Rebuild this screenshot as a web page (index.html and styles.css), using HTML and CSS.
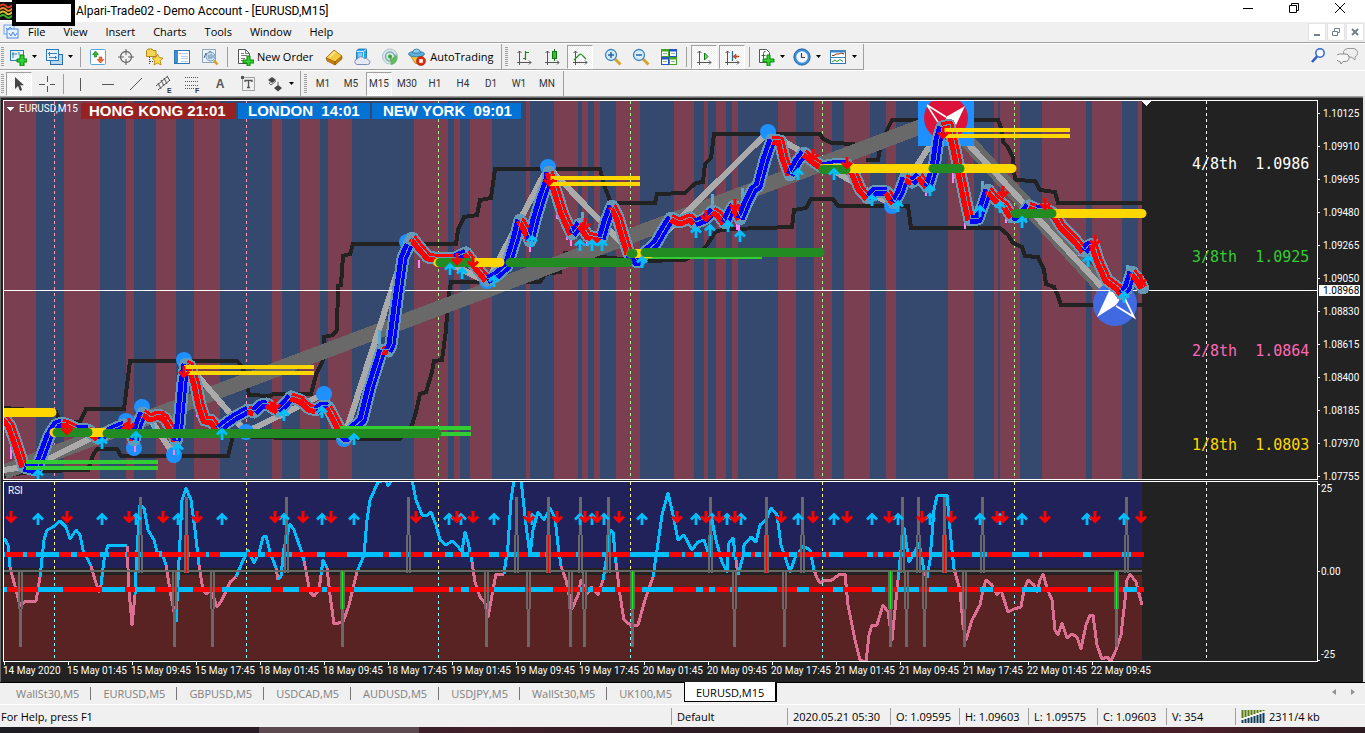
FILE: index.html
```html
<!DOCTYPE html>
<html lang="en">
<head>
<meta charset="utf-8">
<title>Alpari-Trade02 - Demo Account - [EURUSD,M15]</title>
<link rel="stylesheet" href="styles.css">
</head>
<body>
<svg class="defs" aria-hidden="true">
  <defs>
    <symbol id="i-drop" viewBox="0 0 5 3"><path d="M0 0h5L2.500 3z" fill="#000"/></symbol>
    <symbol id="i-chart" viewBox="0 0 18 18"><rect x="1.500" y="2.500" width="13" height="10" fill="#e6f2fa" stroke="#2d7ab8"/><path d="M4 4v6M3 6h5M10 4v3" stroke="#3c7fb5"/><path d="M11 7h4v4h3v3h-3v4h-4v-4H8v-3h3z" fill="#2fd32f" stroke="#07820b"/></symbol>
    <symbol id="i-profiles" viewBox="0 0 18 18"><rect x="5.500" y="6.500" width="12" height="10" fill="#b8d7ee" stroke="#2d6ea8"/><rect x="1.500" y="1.500" width="12" height="11" fill="#e6f2fa" stroke="#2d7ab8"/><path d="M3 5.500h9M4 9.500h8M4.500 4v4M10.500 8v3" stroke="#3c7fb5" fill="none"/></symbol>
    <symbol id="i-market" viewBox="0 0 18 18"><rect x="1.500" y="1.500" width="15" height="15" rx="1" fill="#fff" stroke="#5aa7dc"/><path d="M6.500 3l3 3.500h-1.800V9H5.300V6.500H3.500z" fill="#30b52c" stroke="#117010" stroke-width=".6"/><path d="M11.500 15l-3.300-3.500h2V9h2.600v2.500h2z" fill="#f26a3c" stroke="#b3300e" stroke-width=".6"/></symbol>
    <symbol id="i-cross" viewBox="0 0 18 18"><circle cx="9" cy="9" r="5.500" fill="none" stroke="#666" stroke-width="1.300"/><path d="M9 1v6M9 11v6M1 9h6M11 9h6" stroke="#666" stroke-width="1.100"/></symbol>
    <symbol id="i-nav" viewBox="0 0 18 18"><path d="M1.500 2.500L3 1h4l1 1.500h3v6H1.500z" fill="#f5d355" stroke="#b48a14"/><path d="M4.500 9v8M5 13.500h5" stroke="#444" stroke-dasharray="1 1"/><path d="M12.500 6l1.800 3.600 3.700.5-2.800 2.700.8 4.200-3.500-2-3.500 2 .8-4.200L7 10.100l3.700-.5z" fill="#ffdc4e" stroke="#a97d0c" stroke-width=".8"/></symbol>
    <symbol id="i-terminal" viewBox="0 0 18 18"><rect x="1.500" y="2.500" width="15" height="13" fill="#fff" stroke="#2d78bb"/><rect x="2" y="3" width="3" height="12" fill="#3b8fd2"/><path d="M8 5.500h7M8 8.500h7M8 10.500h7M8 13.500h7" stroke="#b9cfe8"/><path d="M6.500 5.500h1" stroke="#c33"/></symbol>
    <symbol id="i-tester" viewBox="0 0 18 18"><path d="M1.500 1.500h13v13h-13z" fill="#eef3f8" stroke="#8ba6bf"/><path d="M3 10l2-5 2 4 2-6 2 4" fill="none" stroke="#657"/><circle cx="9.500" cy="8.500" r="4.500" fill="#c6e2f5" fill-opacity=".85" stroke="#6d9cc2"/><path d="M8 7v4M10 6v5M12 7v3" stroke="#5c86a6"/><path d="M13 12.500l3.500 4" stroke="#d79e2c" stroke-width="2.500"/></symbol>
    <symbol id="i-order" viewBox="0 0 18 18"><path d="M2.500 1.500h7l4 4v10h-11z" fill="#fff" stroke="#555"/><path d="M9.500 1.500v4h4M5 5.500h3M5 7.500h6M5 10.500h4M5 12.500h3" stroke="#777" fill="none"/><path d="M11 8h3v4h4v3h-4v3h-3v-3H7v-3h4z" fill="#2fd32f" stroke="#07820b"/></symbol>
    <symbol id="i-gold" viewBox="0 0 18 18"><path d="M1 10l8-8 8 6-7 6z" fill="#f7c941" stroke="#a0690c" stroke-width=".8"/><path d="M1 10l9 4v3l-8-4zM10 14l7-6v3l-7 6z" fill="#c98210" stroke="#8c5807" stroke-width=".6"/><path d="M5 9l5-5" stroke="#fff2b8" stroke-width="1.300"/></symbol>
    <symbol id="i-cloud" viewBox="0 0 18 18"><path d="M3.500 3l2-2h8v8l-1 2h-9z" fill="#2ea6f0" stroke="#1269b4" stroke-width=".8"/><path d="M3.500 3.500h7v7M10.500 3.500l3-2.500M5 6h4M5 8h4" fill="none" stroke="#d4efff"/><path d="M4 16.500a2.800 2.800 0 01.3-5.500 4 4 0 017-.5 3 3 0 014 1.500 2.300 2.300 0 01-.8 4.500z" fill="#e4e9f4" stroke="#7a8db4"/></symbol>
    <symbol id="i-signal" viewBox="0 0 18 18"><circle cx="9" cy="8.500" r="7.500" fill="#dceadd" stroke="#a9c0cf"/><circle cx="9" cy="8.500" r="4.500" fill="none" stroke="#7fa9c4" stroke-width="1.500"/><circle cx="9" cy="8.500" r="2" fill="#2ea83d"/><path d="M8.500 10H11a6 6 0 004-4 7 7 0 01-5 11z" fill="#66b862"/></symbol>
    <symbol id="i-auto" viewBox="0 0 18 18"><path d="M2 7h13l-4 9.500L7 15z" fill="#f2c53a" stroke="#a47a0a" stroke-width=".8"/><ellipse cx="8.500" cy="6" rx="8" ry="2.800" fill="#5fb0dc" stroke="#29739d" stroke-width=".8"/><path d="M4.500 5a4 4 0 018 0z" fill="#8fd0ef" stroke="#29739d" stroke-width=".8"/><circle cx="13" cy="13" r="4.500" fill="#e02a13" stroke="#9e1608" stroke-width=".6"/><rect x="11.200" y="11.200" width="3.600" height="3.600" fill="#fff"/></symbol>
    <symbol id="i-axes" viewBox="0 0 18 18"><path d="M4.500 3v14M2 14.500h14M2.500 5l2-2 2 2M14 12.500l2 2-2 2" fill="none" stroke="#555"/></symbol>
    <symbol id="i-bars" viewBox="0 0 18 18"><use href="#i-axes"/><path d="M10.500 3v9M11 4.500h3M8 10.500h3" stroke="#19891d" stroke-width="1.200"/></symbol>
    <symbol id="i-candle" viewBox="0 0 18 18"><use href="#i-axes"/><path d="M11.500 1v12" stroke="#117a14"/><rect x="9.500" y="3.500" width="4" height="7" fill="#29c72c" stroke="#117a14"/></symbol>
    <symbol id="i-line" viewBox="0 0 18 18"><use href="#i-axes"/><path d="M3 12l5-5q2-2 4 1l3 3" fill="none" stroke="#27962a" stroke-width="1.200"/></symbol>
    <symbol id="i-zin" viewBox="0 0 18 18"><path d="M11 11l5.500 5.500" stroke="#d6a52c" stroke-width="3"/><circle cx="7" cy="7" r="5.500" fill="#d5edfb" stroke="#3f82bf" stroke-width="1.300"/><path d="M4 7h6M7 4v6" stroke="#2464a4" stroke-width="1.500"/></symbol>
    <symbol id="i-zout" viewBox="0 0 18 18"><path d="M11 11l5.500 5.500" stroke="#d6a52c" stroke-width="3"/><circle cx="7" cy="7" r="5.500" fill="#d5edfb" stroke="#3f82bf" stroke-width="1.300"/><path d="M4 7h6" stroke="#2464a4" stroke-width="1.500"/></symbol>
    <symbol id="i-tile" viewBox="0 0 18 18"><path d="M1 1h8v8H1zM9 9h8v8H9z" fill="#3fa51f"/><path d="M9 1h8v8H9zM1 9h8v8H1z" fill="#2653c9"/><path d="M2 3.500h6V8H2zM10 3.500h6V8h-6zM2 11.500h6V16H2zM10 11.500h6V16h-6z" fill="#fff"/><path d="M3 5.500h4M11 5.500h4M3 13.500h4M11 13.500h4" stroke="#8b9"/></symbol>
    <symbol id="i-scroll" viewBox="0 0 18 18"><use href="#i-axes"/><path d="M9.500 5v7l3.500-3.500z" fill="#6fe070" stroke="#117a14"/></symbol>
    <symbol id="i-shift" viewBox="0 0 18 18"><use href="#i-axes"/><path d="M9.500 3v10" stroke="#2469a4" stroke-width="1.300"/><path d="M10 8.500l3-2.500v2h3v1h-3v2z" fill="#d9481c" stroke="#a82c08" stroke-width=".5"/></symbol>
    <symbol id="i-ind" viewBox="0 0 18 18"><path d="M2.500 1.500h7l3 3v10h-10z" fill="#fff" stroke="#555"/><path d="M8.500 3.500q-2-.5-2 2v6M4.500 7.500h4" stroke="#555" fill="none"/><path d="M10 7h3v4h4v3h-4v4h-3v-4H6v-3h4z" fill="#2fd32f" stroke="#07820b"/></symbol>
    <symbol id="i-clock" viewBox="0 0 18 18"><circle cx="9" cy="9" r="7" fill="#f2f6fa" stroke="#3b8fe0" stroke-width="2.500"/><circle cx="9" cy="9" r="8.200" fill="none" stroke="#124b87" stroke-width=".7"/><path d="M8.500 5v4.500H12" fill="none" stroke="#444" stroke-width="1.200"/></symbol>
    <symbol id="i-tpl" viewBox="0 0 18 18"><rect x="1.500" y="2.500" width="15" height="13" fill="#fff" stroke="#2d73b6"/><path d="M1 2h16v2.500H1zM1 9h16v1H1z" fill="#3c86c8"/><path d="M3 7.500h2l2-1.500h3l2-1 3 1" fill="none" stroke="#8d3a22"/><path d="M3 14l3-2 2 1.500 3-2 3 2" fill="none" stroke="#27962a"/></symbol>
    <symbol id="i-cursor" viewBox="0 0 18 18"><path d="M5 2v12l3-3 2 5 2.200-1-2-4.800H14z" fill="#444"/></symbol>
    <symbol id="i-hair" viewBox="0 0 18 18"><path d="M9.500 1v6M9.500 11V17M1 9.500h6M12 9.500H17" stroke="#555"/></symbol>
    <symbol id="i-vline" viewBox="0 0 18 18"><path d="M9.500 3v13" stroke="#555"/></symbol>
    <symbol id="i-hline" viewBox="0 0 18 18"><path d="M3 9.500h12" stroke="#555"/></symbol>
    <symbol id="i-trend" viewBox="0 0 18 18"><path d="M3 15L15 3" stroke="#555"/></symbol>
    <symbol id="i-chan" viewBox="0 0 18 18"><path d="M1 11L13 1M3 15L15 5M3 8l3 6M6 5l3 6M9 3l3 6M12 1l3 5" stroke="#555" fill="none"/><text x="12" y="18" class="ico-text">E</text></symbol>
    <symbol id="i-fibo" viewBox="0 0 18 18"><path d="M2 2.500h14M2 6.500h14M2 10.500h14M2 13.500h9" stroke="#555" stroke-dasharray="1 1"/><text x="12" y="18" class="ico-text">F</text></symbol>
    <symbol id="i-label" viewBox="0 0 18 18"><rect x="3.500" y="2.500" width="12" height="13" fill="none" stroke="#555" stroke-dasharray="1 1"/><path d="M2 1h3v3H2z" fill="#555"/><path d="M6 7V5.500h7V7M9.500 5v8M8 12.500h3" stroke="#555" stroke-width="1.300" fill="none"/></symbol>
    <symbol id="i-arrows" viewBox="0 0 18 18"><path d="M2 5l4-3 4 3-4 3zM8 13l4-3 4 3-4 3.500z" fill="#444"/><path d="M3 8l2 2 5-4M5 6l-2 3M12 7v4" stroke="#666" fill="none"/></symbol>
    <symbol id="i-find" viewBox="0 0 18 18"><circle cx="11" cy="6" r="4.200" fill="#f6faff" stroke="#2f67cf" stroke-width="1.500"/><path d="M8 9.500L3 15" stroke="#2a5cc4" stroke-width="2.600"/></symbol>
    <symbol id="i-chat" viewBox="0 0 22 18"><path d="M9 9a5 4 0 012-7.500h6a4.500 4.500 0 011 8.500v3l-3-2.500z" fill="#eee" stroke="#999"/><path d="M3 14.500A4.500 3.600 0 014 7h4a4 3.700 0 010 7.500H6L4 17z" fill="#f6f6f6" stroke="#888"/></symbol>
    <symbol id="i-app" viewBox="0 0 12 18"><rect width="12" height="18" fill="#111"/><g fill="none" stroke-width="1.800"><path d="M0 4q3-3 6 0t6-1" stroke="#e33b22"/><path d="M0 7.500q3-3 6 0t6-1" stroke="#f08b22"/><path d="M0 11q3-3 6 0t6-1" stroke="#d8c32c"/><path d="M0 14.500q3-3 6 0t6-1" stroke="#37b52f"/></g></symbol>
    <symbol id="i-doc" viewBox="0 0 16 16"><rect x="1" y="1" width="10" height="9" fill="#e8f2ff" stroke="#6ca2ea"/><rect x="4" y="5" width="11" height="9" fill="#e8f2ff" stroke="#4d8be0"/><path d="M6 9l2 3 2-4 2 4 2-3M3 4l2 2 2-3 2 2" fill="none" stroke="#4d8be0"/></symbol>
  </defs>
</svg>

<div class="app">
  <header class="titlebar">
    <svg class="app-icon"><use href="#i-app"/></svg>
    <span class="redacted"></span>
    <h1 class="title">Alpari-Trade02 - Demo Account - [EURUSD,M15]</h1>
    <div class="window-controls">
      <button type="button" aria-label="Minimize"><svg viewBox="0 0 12 12"><path d="M1 6.500h10"/></svg></button>
      <button type="button" aria-label="Restore"><svg viewBox="0 0 12 12"><path d="M1.500 3.500h7v7h-7zM3.500 3.500v-2h7v7h-2"/></svg></button>
      <button type="button" aria-label="Close"><svg viewBox="0 0 12 12"><path d="M1 1l10 10M11 1L1 11"/></svg></button>
    </div>
  </header>

  <nav class="menubar">
    <svg class="doc-icon"><use href="#i-doc"/></svg>
    <button type="button">File</button><button type="button">View</button><button type="button">Insert</button><button type="button">Charts</button><button type="button">Tools</button><button type="button">Window</button><button type="button">Help</button>
    <div class="child-controls">
      <button type="button" aria-label="Minimize chart"><svg viewBox="0 0 10 10"><path d="M2 8h6"/></svg></button>
      <button type="button" aria-label="Restore chart"><svg viewBox="0 0 10 10"><path d="M1.500 4.500h5v4h-5zM3.500 4V1.500h5v4H7" class="thin"/></svg></button>
      <button type="button" aria-label="Close chart"><svg viewBox="0 0 10 10"><path d="M2 2l6 6M8 2L2 8"/></svg></button>
    </div>
  </nav>

  <div class="toolrow">
    <div class="toolbar">
      <i class="grip"></i>
      <button class="tb drop" type="button" aria-label="New chart"><svg><use href="#i-chart"/></svg><svg class="arr"><use href="#i-drop"/></svg></button>
      <button class="tb drop" type="button" aria-label="Profiles"><svg><use href="#i-profiles"/></svg><svg class="arr"><use href="#i-drop"/></svg></button>
      <i class="sep"></i>
      <button class="tb" type="button" aria-label="Market Watch"><svg><use href="#i-market"/></svg></button>
      <button class="tb" type="button" aria-label="Data Window"><svg><use href="#i-cross"/></svg></button>
      <button class="tb" type="button" aria-label="Navigator"><svg><use href="#i-nav"/></svg></button>
      <button class="tb" type="button" aria-label="Terminal"><svg><use href="#i-terminal"/></svg></button>
      <button class="tb" type="button" aria-label="Strategy Tester"><svg><use href="#i-tester"/></svg></button>
      <i class="sep"></i>
      <button class="tb wide" type="button"><svg><use href="#i-order"/></svg>New Order</button>
      <button class="tb" type="button" aria-label="MetaEditor"><svg><use href="#i-gold"/></svg></button>
      <button class="tb" type="button" aria-label="Virtual hosting"><svg><use href="#i-cloud"/></svg></button>
      <button class="tb" type="button" aria-label="Signals"><svg><use href="#i-signal"/></svg></button>
      <button class="tb wide auto" type="button"><svg><use href="#i-auto"/></svg>AutoTrading</button>
    </div>
    <div class="toolbar">
      <i class="grip"></i>
      <button class="tb" type="button" aria-label="Bar chart"><svg><use href="#i-bars"/></svg></button>
      <button class="tb" type="button" aria-label="Candlesticks"><svg><use href="#i-candle"/></svg></button>
      <button class="tb on" type="button" aria-label="Line chart"><svg><use href="#i-line"/></svg></button>
      <i class="sep clear"></i>
      <button class="tb" type="button" aria-label="Zoom in"><svg><use href="#i-zin"/></svg></button>
      <button class="tb" type="button" aria-label="Zoom out"><svg><use href="#i-zout"/></svg></button>
      <button class="tb" type="button" aria-label="Tile windows"><svg><use href="#i-tile"/></svg></button>
      <i class="sep"></i>
      <button class="tb on" type="button" aria-label="Auto scroll"><svg><use href="#i-scroll"/></svg></button>
      <button class="tb on" type="button" aria-label="Chart shift"><svg><use href="#i-shift"/></svg></button>
      <i class="sep"></i>
      <button class="tb drop" type="button" aria-label="Indicators"><svg><use href="#i-ind"/></svg><svg class="arr"><use href="#i-drop"/></svg></button>
      <button class="tb drop" type="button" aria-label="Periods"><svg><use href="#i-clock"/></svg><svg class="arr"><use href="#i-drop"/></svg></button>
      <button class="tb drop" type="button" aria-label="Templates"><svg><use href="#i-tpl"/></svg><svg class="arr"><use href="#i-drop"/></svg></button>
    </div>
    <div class="tools-right">
      <button class="tb" type="button" aria-label="Search"><svg><use href="#i-find"/></svg></button>
      <button class="tb" type="button" aria-label="Chat"><svg class="chat"><use href="#i-chat"/></svg></button>
    </div>
  </div>

  <div class="toolrow second">
    <div class="toolbar">
      <i class="grip"></i>
      <button class="tb on" type="button" aria-label="Cursor"><svg><use href="#i-cursor"/></svg></button>
      <button class="tb" type="button" aria-label="Crosshair"><svg><use href="#i-hair"/></svg></button>
      <i class="sep"></i>
      <button class="tb" type="button" aria-label="Vertical line"><svg><use href="#i-vline"/></svg></button>
      <button class="tb" type="button" aria-label="Horizontal line"><svg><use href="#i-hline"/></svg></button>
      <button class="tb" type="button" aria-label="Trendline"><svg><use href="#i-trend"/></svg></button>
      <button class="tb" type="button" aria-label="Equidistant channel"><svg><use href="#i-chan"/></svg></button>
      <button class="tb" type="button" aria-label="Fibonacci"><svg><use href="#i-fibo"/></svg></button>
      <button class="tb letter" type="button">A</button>
      <button class="tb" type="button" aria-label="Text label"><svg><use href="#i-label"/></svg></button>
      <button class="tb drop" type="button" aria-label="Arrows"><svg><use href="#i-arrows"/></svg><svg class="arr"><use href="#i-drop"/></svg></button>
    </div>
    <div class="toolbar periods">
      <i class="grip"></i>
      <button class="tb" type="button">M1</button><button class="tb" type="button">M5</button><button class="tb on" type="button">M15</button><button class="tb" type="button">M30</button><button class="tb" type="button">H1</button><button class="tb" type="button">H4</button><button class="tb" type="button">D1</button><button class="tb" type="button">W1</button><button class="tb" type="button">MN</button>
    </div>
  </div>

  <main class="chart">
    <svg id="chart" viewBox="0 96 1365 586" role="img" aria-label="EURUSD M15 chart with RSI"></svg>
  </main>

  <nav class="tabs">
    <a href="#">WallSt30,M5</a><a href="#">EURUSD,M5</a><a href="#">GBPUSD,M5</a><a href="#">USDCAD,M5</a><a href="#">AUDUSD,M5</a><a href="#">USDJPY,M5</a><a href="#">WallSt30,M5</a><a href="#" class="last">UK100,M5</a><a href="#" class="active" aria-current="page">EURUSD,M15</a>
    <div class="tab-scroll">
      <button type="button" aria-label="Scroll left"><svg viewBox="0 0 4 6"><path d="M4 0v6L0 3z"/></svg></button>
      <button type="button" aria-label="Scroll right"><svg viewBox="0 0 4 6"><path d="M0 0v6l4-3z"/></svg></button>
    </div>
  </nav>

  <footer class="status">
    <span class="help">For Help, press F1</span>
    <span class="profile">Default</span>
    <span class="time">2020.05.21 05:30</span>
    <span>O: 1.09595</span>
    <span>H: 1.09603</span>
    <span>L: 1.09575</span>
    <span>C: 1.09603</span>
    <span>V: 354</span>
    <span class="traffic"><svg viewBox="0 0 24 13"><path class="g" d="M1.500 0v8M4.500 0v7M7.500 0v6M10.500 0v5M13.500 0v4M16.500 0v3M19.500 0v2M22.500 0v1"/><path class="n" d="M1.500 10v3M4.500 9v4M7.500 8v5M10.500 7v6M13.500 6v7M16.500 5v8M19.500 4v9M22.500 3v10"/></svg>2311/4 kb</span>
  </footer>
  <div class="taskbar"><i></i></div>
</div>
<script src="chart.js"></script>
</body>
</html>
```
FILE: styles.css
```css
* { box-sizing: border-box; }
body { margin: 0; background: #f0f0f0; color: #000; font: 11px/16px "Open Sans", "Noto Sans", sans-serif; }
button { border: 0; padding: 0; margin: 0; background: none; color: inherit; font: inherit; }
.defs { position: absolute; width: 0; height: 0; }
.app { display: flex; flex-direction: column; min-height: 100vh; }

.titlebar { display: flex; align-items: center; height: 22px; background: #fff; }
.app-icon { width: 12px; height: 18px; }
.redacted { align-self: flex-start; width: 63px; height: 26px; border: 4px solid #000; background: #fff; z-index: 1; }
.title { flex: 1; margin: 0 0 0 1px; font: 400 12px/16px Roboto, sans-serif; }
.window-controls { display: flex; margin-right: 2px; align-self: flex-start; }
.window-controls button { width: 46px; height: 20px; }
.window-controls svg { width: 12px; height: 12px; fill: none; stroke: #000; }

.menubar { display: flex; align-items: center; height: 21px; border-bottom: 1px solid #a0a0a0; }
.menubar > button { padding: 0 9px; }
.doc-icon { width: 16px; height: 16px; margin: 2px 0 0 3px; align-self: flex-start; }
.child-controls { display: flex; gap: 1px; margin-left: auto; margin-right: 1px; }
.child-controls button { width: 18px; height: 18px; background: #fff; border: 1px solid #e3e3e3; display: grid; place-items: center; }
.child-controls svg { width: 10px; height: 10px; fill: none; stroke: #70808f; stroke-width: 2; }
.child-controls .thin { stroke-width: 1; }

.toolrow { display: flex; height: 27px; border-top: 1px solid #fff; }
.toolbar { display: flex; align-items: center; padding-right: 2px; border-right: 1px solid #a0a0a0; border-bottom: 1px solid #a0a0a0; }
.toolrow.second { height: 26px; }
.toolrow.second .toolbar { border-bottom: 0; }
.grip { width: 3px; height: 20px; margin: 0 1px; background: repeating-linear-gradient(#a0a0a0 0 1px, #f0f0f0 1px 2px); }
.toolbar + .toolbar .grip { margin: 0 2px 0 3px; }
.sep { width: 1px; height: 20px; margin: 0 3px; background: #a0a0a0; }
.sep.clear, .second .sep { margin: 0 2px; }
.sep.clear { background: none; }
.tb { display: flex; align-items: center; justify-content: center; width: 28px; height: 24px; }
.tb svg { width: 18px; height: 18px; flex: none; }
.tb .arr { width: 5px; height: 3px; margin-left: 5px; }
.tb .chat { width: 22px; }
.tb.drop { width: 36px; }
.tb.wide { width: auto; padding: 0 7px 0 5px; gap: 3px; }
.tb.auto { padding: 0 6px 0 4px; gap: 4px; }
.tb.on { width: 26px; margin: 0 1px; border: 1px solid; border-color: #a0a0a0 #fff #fff #a0a0a0; background: repeating-conic-gradient(#fff 0 25%, #efefef 0 50%) 0 0 / 2px 2px; }
.tb.letter { font: bold 12px "Liberation Sans", sans-serif; color: #555; }
.ico-text { font: bold 7px "Liberation Sans", sans-serif; fill: #333; }
.periods .tb { font: 10px Roboto, sans-serif; color: #333; }
.tools-right { display: flex; gap: 2px; margin-left: auto; margin-right: 3px; }

.chart { background: #222; }
.chart > svg { display: block; width: 100%; height: auto; }
.chart text { font-family: Roboto, sans-serif; font-size: 10px; fill: #fff; white-space: pre; }
.chart .session { font: bold 15px "Liberation Sans", sans-serif; fill: #fff; }
.chart .level { font: 15px "DejaVu Sans Mono", monospace; }

.tabs { display: flex; align-items: flex-start; height: 22px; border-top: 1px solid #000; color: #808080; }
.tabs a { position: relative; padding: 0 12px; line-height: 21px; color: inherit; text-decoration: none; }
.tabs a:first-child { padding-left: 16px; }
.tabs a:not(.active):not(.last)::after { content: ""; position: absolute; right: 0; top: 4px; height: 13px; border-right: 1px solid #777; }
.tabs .active { height: 20px; margin-top: -1px; padding: 0 11px; border: 1px solid #000; border-top: 0; border-right-width: 2px; background: #fff; color: #000; }
.tab-scroll { display: flex; margin-left: auto; margin-right: 3px; }
.tab-scroll button { width: 19px; height: 16px; }
.tab-scroll svg { width: 4px; height: 6px; fill: #909090; }

.status { display: flex; align-items: stretch; height: 23px; padding: 3px 0 2px; border-top: 1px solid #fff; line-height: 18px; }
.status span { width: 69px; padding-left: 5px; border-left: 1px solid #a0a0a0; white-space: nowrap; }
.status .help { flex: 1; padding-left: 1px; border-left: 0; }
.status .profile { width: 116px; }
.status .time { width: 103px; }
.status .traffic { display: flex; align-items: center; gap: 4px; width: 130px; }
.traffic svg { width: 24px; height: 13px; }
.traffic .g { stroke: #5a7d0c; stroke-width: 2; }
.traffic .n { stroke: #12405c; stroke-width: 2; }
.taskbar { flex: 1; min-height: 6px; background: linear-gradient(90deg, #1d1c22, #2b1c24 20%, #42202a 35%, #2c1b22 50%, #3a1c24 75%, #4a2029 88%, #2b1a20); }
.taskbar i { display: block; width: 160px; height: 6px; margin-left: 19%; background: #5b494f; }
```
FILE: chart.js
```js
const NS = "http://www.w3.org/2000/svg";
const root = document.getElementById("chart");
const parts = [];
const put = s => parts.push(s);
const rect = (x, y, w, h, fill) => put(`<rect x="${x}" y="${y}" width="${w}" height="${h}" fill="${fill}"/>`);
const line = (pts, stroke, w, extra = "") => put(`<polyline points="${pts}" fill="none" stroke="${stroke}" stroke-width="${w}" ${extra}/>`);
const text = (x, y, s, cls = "", extra = "") => put(`<text x="${x}" y="${y}" class="${cls}" ${extra}>${s}</text>`);

const RED = "#ff0000", BLUE = "#0000ff", SKY = "#00bfff", STEEL = "#6699b5", GOLD = "#ffd700", GREEN = "#228b22", LIME = "#32cd32", DODGER = "#1e90ff", DARK = "#222222", DIM = "#696969";

put(`<defs><clipPath id="main"><rect x="4" y="101" width="1313" height="378"/></clipPath><clipPath id="rsi"><rect x="4" y="482" width="1313" height="179"/></clipPath></defs>`);
rect(0, 96, 1365, 586, DARK);
rect(0, 96, 1365, 1, "#a0a0a0");
rect(0, 97, 1363, 1, DIM);
rect(0, 97, 1, 585, DIM);
rect(1363, 96, 2, 586, "#e3e3e3");
put(`<g shape-rendering="crispEdges">`);

/* trend background */
rect(4, 101, 1138, 378, "#35486e");
[[4,36],[64,100],[126,134],[156,176],[194,220],[272,282],[300,320],[328,352],[414,448],[454,460],[470,492],[526,530],[554,578],[582,588],[594,600],[616,640],[674,694],[704,708],[716,726],[732,738],[778,796],[814,832],[844,870],[886,896],[948,974],[994,998],[1000,1020],[1042,1086],[1092,1122],[1138,1142]]
  .forEach(([a, b]) => rect(a, 101, b - a, 378, "#7a4052"));
rect(4, 482, 1138, 86, "#212259");
rect(4, 575, 1138, 85, "#592223");

/* day separators */
[[54,"#ff9bb4"],[246,"#ff9bb4"],[438,"#a6f28a"],[630,"#a6f28a"],[822,"#a6f28a"],[1014,"#a6f28a"],[1206,"#ffffff"]].forEach(([x, c]) => {
  const d = `stroke-dasharray="3 3"`, w = c === "#ffffff";
  line(`${x + .5},101 ${x + .5},479`, c, 1, d);
  line(`${x + .5},482 ${x + .5},571`, w ? c : "#ffff80", 1, d);
  line(`${x + .5},571 ${x + .5},660`, w ? c : "#80ffff", 1, d);
});

put(`<g clip-path="url(#main)">`);
/* channel */
line("4,408 56,412 60,421 80,422 86,409 124,409 130,361 237,361 242,366 246,378 249,395 270,396 273,394 311,394 316,375 323,360 324,337 333,335 337,330 338,286 341,285 343,256 350,254 353,244 456,244 458,230 464,217 477,215 480,200 491,198 495,169 600,169 604,185 611,203 655,203 657,194 685,193 690,188 696,183 703,182 705,164 711,158 714,134 820,134 823,139 832,143 855,144", DARK, 4);
line("866,160 878,160 881,143 887,130 892,120 998,120 1002,130 1003,142 1008,147 1013,158 1015,180 1035,181 1040,190 1055,192 1058,203 1142,203", DARK, 4);
line("4,476 36,471 88,470 93,455 97,449 117,449 121,456 228,456 233,436 287,438 400,439 412,425 416,412 420,394 426,392 432,372 434,361 442,360 446,330 448,300 451,282 540,282 545,274 560,272 565,253 640,261 685,260 700,252 707,245 716,231 733,229 792,227 794,210 806,208 811,199 833,199 838,206 908,206 911,228 1000,228 1008,235 1013,243 1022,247 1025,256 1038,257 1044,270 1046,284 1054,287 1058,296 1061,305 1142,305", DARK, 4);
/* long swing */
line("4,472 920,127 946,118 1114,300", DIM, 15);
const swing = "4,470 36,465 126,421 134,448 142,407 174,455 184,360 246,432 324,394 344,438 407,242 487,282 548,167 638,260 768,132 892,205 946,120 1114,300";
line(swing, "#aaaaaa", 6);
put(`<g fill="${DODGER}" shape-rendering="auto">`);
[[126,421],[134,448],[142,407],[174,455],[184,360],[246,432],[324,394],[344,439],[407,242],[487,281],[548,167],[638,260],[768,132],[892,206]]
  .forEach(([x, y]) => put(`<circle cx="${x}" cy="${y}" r="8"/>`));
put(`</g>`);
rect(918, 101, 56, 45, DODGER);
put(`<g shape-rendering="auto"><circle cx="946" cy="118" r="22" fill="#dc143c"/><path d="M927 105l19 12M927 105l14 22" stroke="#fff" stroke-width="1.500"/><path d="M965 106l-19 11 2 10 8-2z" fill="#fff"/><circle cx="1115" cy="304" r="22" fill="#4169e1"/><path d="M1097 317l12-26 14 4-7 10z" fill="#fff"/><path d="M1123 295l11 22-18-11" fill="none" stroke="#fff" stroke-width="1.800"/></g>`);

line("4,290.500 1317,290.500", "#fff", 1);

/* wicks */
[[10,447,12],[98,433,6],[134,442,10],[173,443,12],[196,405,12],[332,420,8],[418,260,8],[529,240,12],[556,205,14],[566,230,10],[570,236,10],[586,238,8],[736,220,10],[738,222,10],[780,160,8],[925,188,8],[952,150,33],[964,215,14],[1005,217,6],[1078,248,8],[1094,255,10]].forEach(([x, y, h]) => rect(x, y, 2, h, "#ff80ff"));
[[84,424,8],[152,424,6],[238,409,6],[378,330,20],[392,285,20],[581,212,20],[711,194,15],[741,188,12],[758,160,12],[981,181,10],[1126,265,12]].forEach(([x, y, h]) => rect(x, y, 3, h, "#5fa8cc"));

/* smoothed price: colour, then x,y pairs */
const price = [
  ["r",4,418,10,426,16,443,24,467],["b",24,467,36,470,42,455,49,436,56,425,62,423],["r",62,423,68,425,76,429],["b",76,429,88,430],["r",88,430,98,438],["b",98,438,112,430,124,425],["r",124,425,130,430,134,440],["b",134,440,138,425,143,413],["r",143,413,150,418,158,415,165,418,172,430,176,441],["b",176,441,179,425,183,382,186,364],["r",186,364,190,366,196,385,200,405,205,420,211,420,218,430],["b",218,430,225,424,235,417,248,410],["r",248,410,254,412],["b",254,412,261,405,267,404],["r",267,404,278,411],["b",278,411,285,404,291,397],["r",291,397,300,400,309,408,316,410],["b",316,410,322,406,328,407],["r",328,407,335,420,342,434],["b",342,434,346,438,353,428,362,420,370,388,382,350],["r",382,350,388,351],["b",388,351,391,345,397,300,403,258,409,245],["r",412,238,420,248,428,257,440,259,455,258],["b",455,258,466,253],["r",466,253,474,264,487,280],["b",487,280,497,275,507,266,515,240,520,220],["r",520,220,526,230,530,241],["b",530,241,535,220,541,200,548,180,549,172],["r",549,172,556,192,563,214,572,234],["b",572,234,580,224],["r",580,224,588,236,601,239],["b",601,239,606,222,612,206],["r",612,206,618,218,624,238,629,254],["b",629,254,637,262,646,252,656,243,664,229,671,218],["r",671,218,679,222,690,218,695,223],["b",695,223,705,219,713,211],["r",713,211,718,214,725,223],["b",725,223,731,210,734,206],["r",734,206,740,219],["b",740,219,747,202,753,190,758,186,765,160,772,140],["r",772,140,780,141,784,158,790,175],["b",790,175,797,162,804,153],["r",804,153,812,160,822,167],["b",822,167,832,165,846,164],["r",846,164,853,172,860,189,868,198],["b",868,198,875,191,887,192],["r",887,192,894,203],["b",894,203,900,192,905,178],["r",905,178,912,182],["b",912,182,919,176],["r",919,176,928,187],["b",928,187,934,168,938,140,942,127],["r",942,127,949,125,954,145,961,178,966,202,970,220],["b",970,220,978,219,984,202,988,190],["r",988,190,996,199,1005,206,1012,217],["b",1012,217,1022,215,1029,206],["r",1029,206,1036,209],["b",1036,209,1045,209],["r",1045,209,1054,214,1062,227,1075,240,1084,251],["b",1084,251,1088,246,1093,244],["r",1093,244,1098,260,1107,280,1118,288,1122,294],["b",1122,294,1127,288,1132,272],["r",1132,272,1137,278,1143,288]
];
const pairs = a => a.slice(1).join(" ");
const join = `stroke-linejoin="round" stroke-linecap="round"`;
line(price.map(pairs).join(" "), STEEL, 13, join);
price.forEach(s => line(pairs(s), s[0] === "r" ? RED : BLUE, 9, `stroke-linejoin="round"`));
put(`<g transform="translate(1 -1)">`);
line(price.map(pairs).join(" "), STEEL, 1, join);
put(`</g>`);

/* support and resistance */
[[184,314,367,GOLD],[184,314,373,GOLD],[548,640,178,GOLD],[548,640,184,GOLD],[941,1070,130,GOLD],[941,1070,136,GOLD],[26,158,462,LIME],[26,158,468,LIME],[340,471,428,LIME],[340,471,434,LIME],[640,762,257,LIME]]
  .forEach(([a, b, y, c]) => line(`${a},${y} ${b},${y}`, c, 4));
put(`<g stroke-linecap="round" stroke-width="9" shape-rendering="auto">`);
[[-4,52,412,GOLD],[54,104,432,GOLD],[57,88,432,GREEN],[107,437,433,GREEN],[438,500,262,GOLD],[440,470,262,GREEN],[510,628,262,GREEN],[631,650,253,GOLD],[631,633,253,GREEN],[645,820,252,GREEN],[824,1012,168,GOLD],[823,846,169,GREEN],[933,960,168,GREEN],[1020,1142,213,GOLD],[1015,1052,213,GREEN]]
  .forEach(([a, b, y, c]) => put(`<path d="M${a} ${y + .5}H${b}" stroke="${c}"/>`));
put(`</g>`);
put(`<g shape-rendering="auto">`);
const up = (x, y) => put(`<path transform="translate(${x} ${y})" d="M-5 0.500L0 -4.500L5 0.500M0 -4V6" fill="none" stroke="${SKY}" stroke-width="2.800"/>`);
const down = (x, y) => put(`<path transform="translate(${x} ${y})" d="M-5 -0.500L0 4.500L5 -0.500M0 4V-6" fill="none" stroke="${RED}" stroke-width="3"/>`);
[[38,475],[102,443],[136,437],[178,449],[222,434],[284,415],[322,412],[354,439],[450,269],[462,273],[494,281],[532,241],[580,245],[592,245],[602,245],[642,262],[696,232],[710,230],[728,226],[740,236],[798,174],[834,174],[872,200],[898,206],[930,190],[980,211],[1000,207],[1022,222],[1088,261],[1124,297]].forEach(p => up(...p));
[[67,429],[129,424],[163,417],[184,372],[275,405],[303,402],[457,259],[473,262],[549,180],[585,224],[706,216],[735,205],[813,155],[847,163],[943,133],[1003,192],[1045,204],[1095,241],[1141,280]].forEach(p => down(...p));
put(`</g></g>`);

/* oscillator */
put(`<g clip-path="url(#rsi)">`);
const rsi = [
  ["s",4,538,8,545,10,567],["p",10,567,16,590,20,606,24,602,36,601,40,577],["s",40,577,44,540,47,530,53,527,60,521,66,527,70,539,76,530,80,535,83,550,91,566],["p",91,566,95,580,99,592,101,585],["s",101,585,104,560,108,545,118,545,127,546],["p",127,546,129,590,132,625,135,595],["s",135,595,137,550,140,505,144,508,148,530,154,540,157,552,162,553,166,565],["p",166,565,170,590,176,622],["s",176,622,178,580,182,500,186,488,191,500,195,530,199,565],["p",199,565,203,590,206,594,211,590,217,607,222,600,230,582,236,577],["s",236,577,241,565,248,550,254,563,259,553,263,537,266,536,270,552,276,568],["p",276,568,278,580],["s",278,580,281,576,284,548,290,524,294,530,301,550,304,561],["p",304,561,310,592,314,596,319,590,321,575],["s",321,575,323,560,327,568],["p",327,568,330,595,334,624,343,622,349,605,357,572],["s",357,572,364,555,367,520,370,500,378,482,386,480,388,486,392,480,412,480,416,500,422,515,426,516,431,512,436,525,440,540,446,545,452,541,456,544,462,552,465,532,468,542,472,562],["p",472,562,475,582,480,597,485,603,488,617,493,590,496,574,504,574],["s",504,574,508,545,511,500,514,480,521,480,526,525,530,555,533,530,538,512,544,520,550,508,555,518,558,545,561,566],["p",561,566,566,580,572,609,578,595,581,580,587,594,592,587,598,595,603,580],["s",603,580,607,555,610,530,613,532,616,563],["p",616,563,620,595,624,620,632,626,638,625,645,600,653,577],["s",653,577,657,550,662,515,668,493,673,515,678,540,684,535,692,550,698,542,704,540,709,555,712,520,716,540,722,562,727,572,729,543,733,538,736,560],["p",736,560,738,575],["s",738,575,742,560,744,545,751,537,756,542,760,525,766,520,771,508,777,515,781,545,786,560,790,572,795,558,803,546,810,550,814,570],["p",814,570,817,578,820,583,825,580,832,580,840,574,845,574,848,605,855,640,860,660,866,662,869,635,872,625,877,625,883,605,888,612,892,640,898,580],["s",898,580,901,550,904,528,909,562,914,553,919,543,924,570],["p",924,570,927,578],["s",927,578,930,560,934,510,937,496,947,495,951,540,954,569],["p",954,569,960,590,963,625,966,640,972,620,980,605,983,590,986,580,992,585,997,595,1001,590,1008,612,1014,609,1021,607,1024,590,1028,580,1034,585,1037,592,1040,580,1043,574,1047,588,1052,600,1055,630,1058,635,1062,623,1067,638,1072,634,1077,637,1081,649,1086,625,1090,615,1093,615,1097,645,1102,659,1107,657,1111,661,1116,650,1121,635,1125,600,1127,580,1130,574,1136,582,1142,605]
];
rsi.forEach(s => line(pairs(s), s[0] === "s" ? SKY : "#db7093", 3, `stroke-linejoin="round"`));

/* strips: ends of alternating segments, blue first */
const strip = (y, ends) => {
  let x = 4, blue = true;
  ends.forEach(e => { rect(x, y, e - x, 5, blue ? SKY : RED); x = e; blue = !blue; });
};
strip(552, [5,23,27,36,59,71,77,100,109,125,127,138,143,159,162,185,190,206,209,220,247,258,265,282,292,317,325,347,383,389,401,406,409,424,432,445,453,461,469,489,499,507,519,528,540,545,549,576,580,602,607,630,669,682,685,694,702,709,713,732,735,742,751,755,761,768,771,789,797,822,826,829,843,867,873,878,883,893,903,911,917,929,945,972,987,1012,1029,1039,1042,1083,1091,1122,1131,1144]);
strip(587, [7,38,63,102,125,135,155,178,193,222,271,283,299,322,327,354,413,449,453,461,469,494,525,531,553,580,584,588,593,602,615,642,673,696,703,709,715,730,732,738,777,797,809,833,843,872,885,897,919,929,947,980,993,1022,1041,1088,1091,1123,1137,1144]);

line("4,571 1142,571", DIM, 2);
const spike = (x, dir, fill) => {
  const far = dir < 0 ? 497 : 609, near = dir < 0 ? 535 : 571;
  rect(x - 1, far, 3, 38, DIM);
  if (fill) rect(x, near, 1, 38, fill);
  rect(x - 2, near, 2, 38, DIM);
  rect(x + 1, near, 2, 38, DIM);
};
[[140],[186,RED],[286],[408],[516],[548,RED],[580],[608],[710],[766,RED],[802],[902],[918],[944,RED],[982],[1126]].forEach(([x, c]) => spike(x, -1, c));
[[20],[174],[212],[342,"#00ff00"],[486],[528],[570],[584],[632,"#00ff00"],[734],[784],[890,"#00ff00"],[906],[924],[964],[1116,"#00ff00"]].forEach(([x, c]) => spike(x, 1, c));
put(`<g shape-rendering="auto">`);
[38,102,136,178,222,284,322,354,449,461,494,532,580,592,604,642,696,712,727,741,798,834,872,898,930,980,1000,1022,1087,1124].forEach(x => up(x, 519));
[11,67,129,163,197,275,303,331,416,457,473,529,557,585,597,619,677,706,719,735,781,813,847,889,922,951,997,1003,1045,1095,1141].forEach(x => down(x, 517));
put(`</g></g>`);

/* frames and ticks */
put(`<path d="M3.500 479.500V100.500H1317.500V479.500ZM3.500 481.500H1317.500V661.500H3.500Z" fill="none" stroke="#fff"/>`);
put(`<path d="M1141 101h10l-5 5z" fill="#fff"/>`);
const prices = ["1.10125","1.09910","1.09695","1.09480","1.09265","1.09050","1.08830","1.08615","1.08400","1.08185","1.07970","1.07755"];
prices.forEach((p, i) => rect(1318, 113 + i * 33, 2, 1, "#fff"));
for (let i = 0; i < 18; i++) rect(4 + i * 64, 662, 1, 3, "#fff");
rect(1318, 484, 2, 1, "#fff"); rect(1318, 571, 2, 1, "#fff"); rect(1318, 660, 2, 1, "#fff");
rect(1319, 285, 41, 11, "#fff");
rect(81, 103, 155, 16, "#982121");
rect(238, 103, 132, 16, "#0273d4");
rect(372, 103, 149, 16, "#0273d4");
put(`<path d="M7 107h7l-3.500 4z" fill="#fff"/></g>`);

/* labels */
text(19, 112, "EURUSD,M15");
text(89, 116, "HONG KONG 21:01", "session");
text(248, 116, "LONDON  14:01", "session");
text(383, 116, "NEW YORK  09:01", "session");
text(8, 494, "RSI");
prices.forEach((p, i) => text(1323, 117 + i * 33, p));
text(1323, 294, "1.08968", "", `style="fill:#000"`);
text(1321, 492, "25");
text(1321, 575, "0.00");
text(1321, 658, "-25");
[[169,"4/8th  1.0986","#fff"],[262,"3/8th  1.0925",LIME],[356,"2/8th  1.0864","#ff69b4"],[450,"1/8th  1.0803",GOLD]].forEach(([y, s, c]) => text(1192, y, s, "level", `style="fill:${c}"`));
["14 May 2020","15 May 01:45","15 May 09:45","15 May 17:45","18 May 01:45","18 May 09:45","18 May 17:45","19 May 01:45","19 May 09:45","19 May 17:45","20 May 01:45","20 May 09:45","20 May 17:45","21 May 01:45","21 May 09:45","21 May 17:45","22 May 01:45","22 May 09:45"].forEach((d, i) => text(3 + i * 64, 674, d));

root.innerHTML = parts.join("");
```
